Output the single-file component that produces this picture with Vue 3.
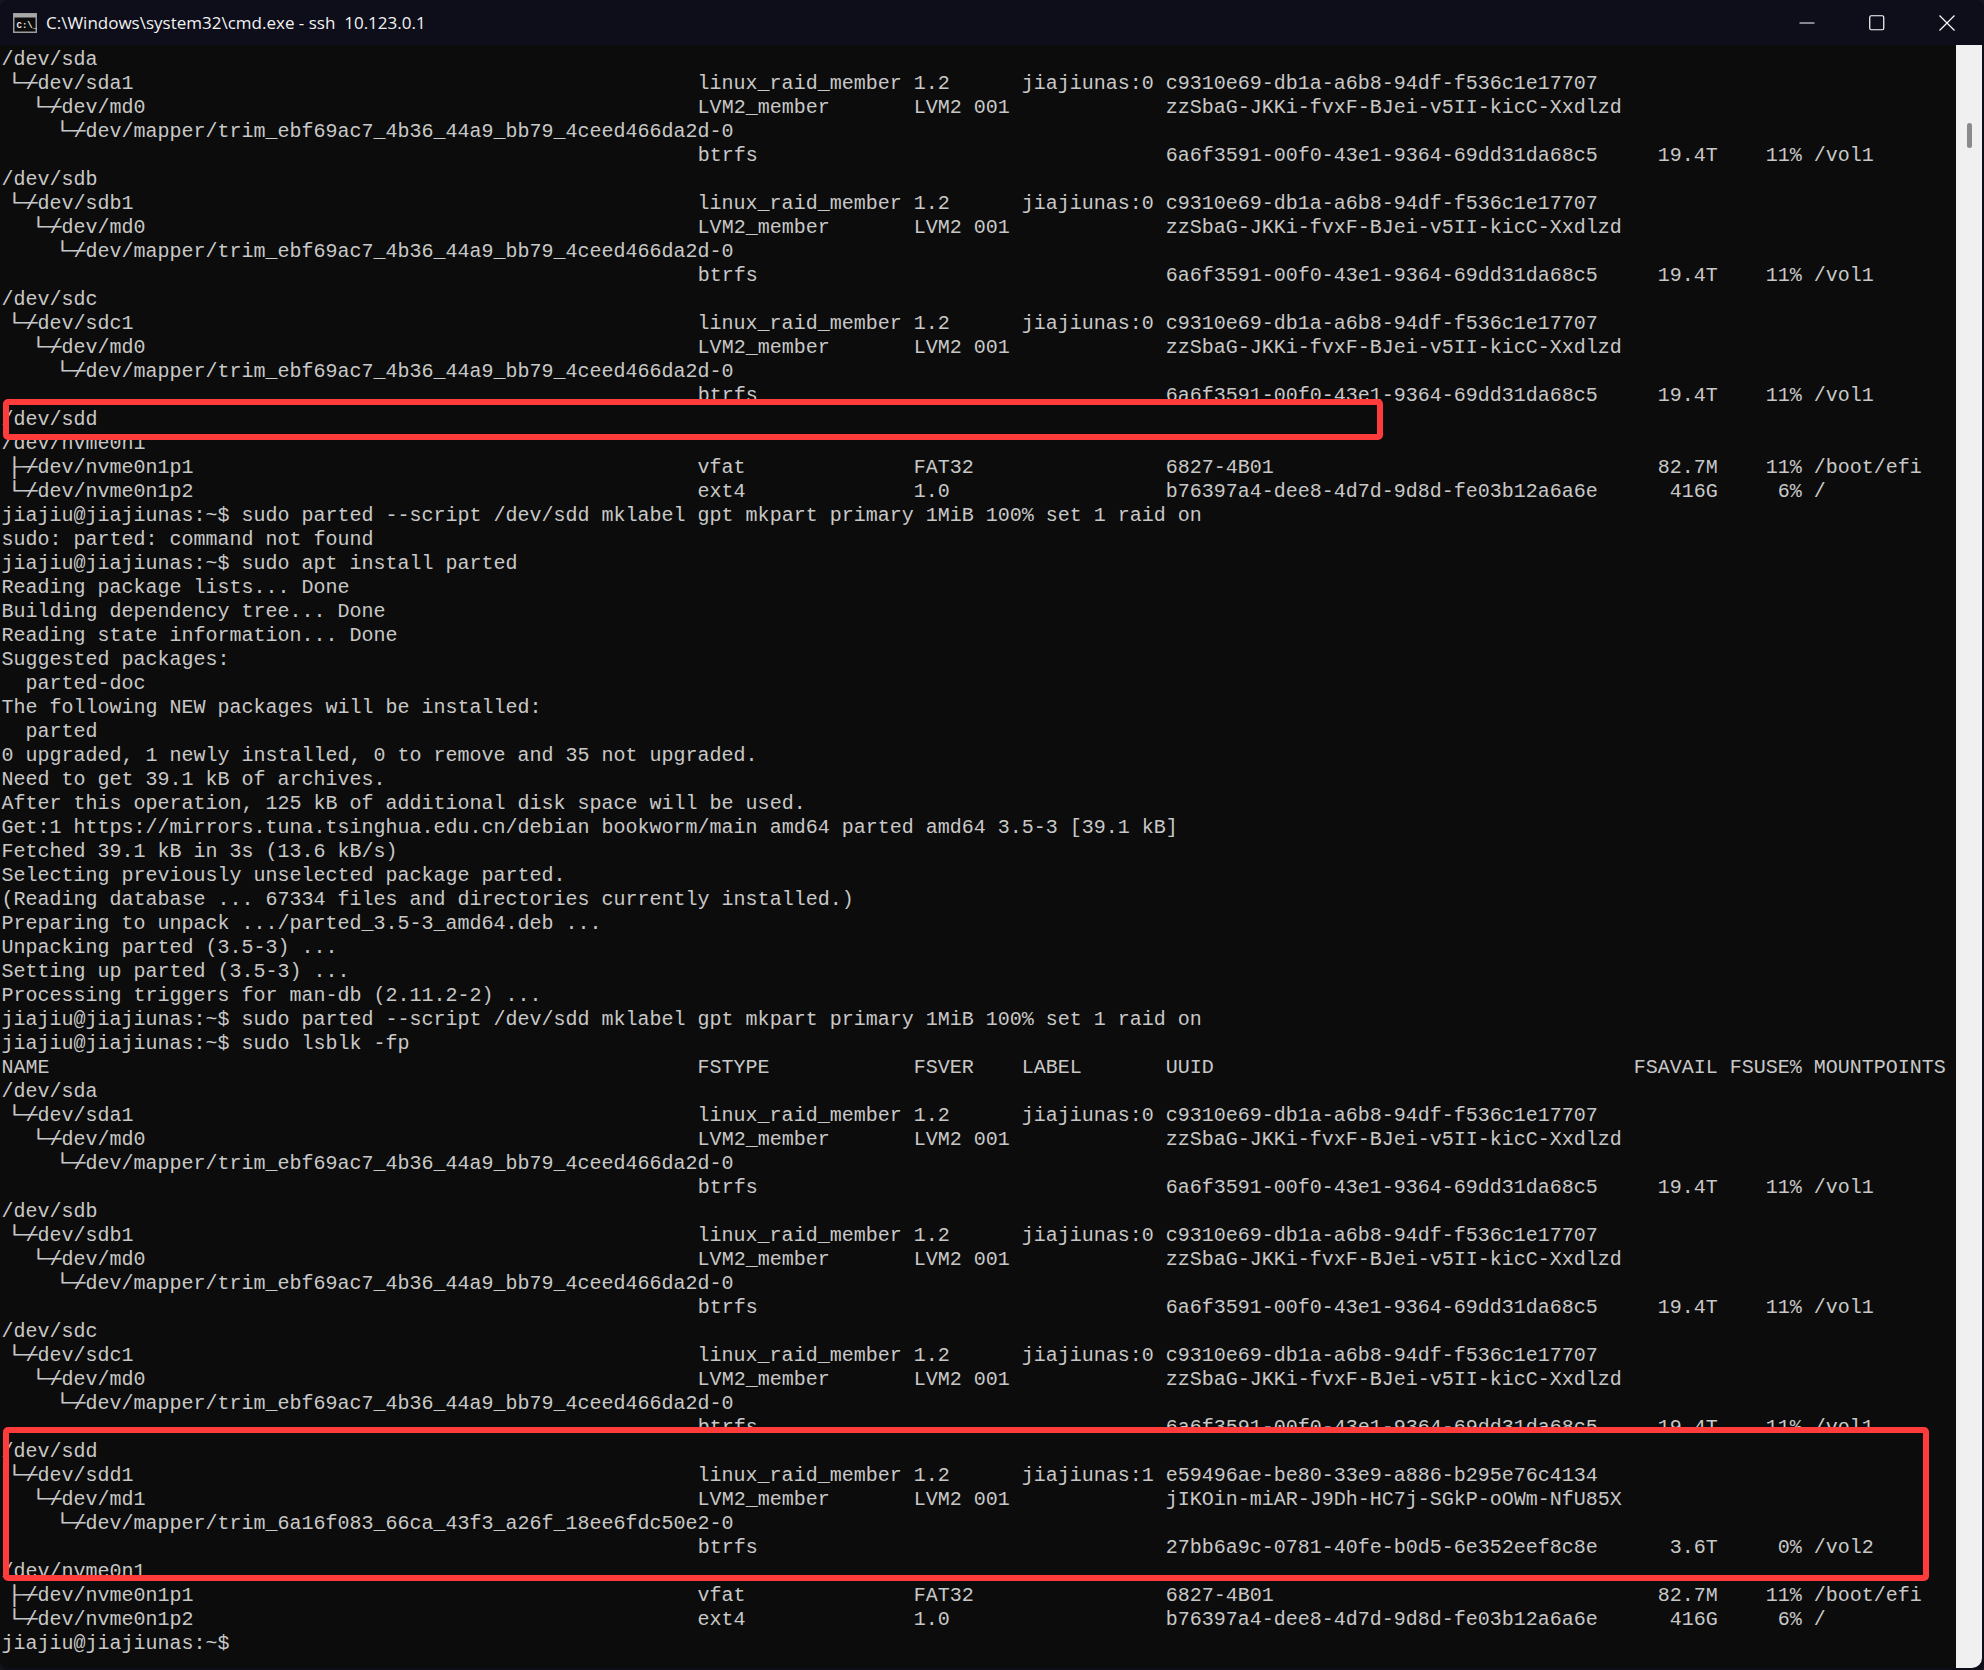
<script setup>
const COLS = [0, 58, 76, 85, 97, 136, 144, 151]

const row = (name, fstype = '', fsver = '', label = '', uuid = '', avail = '', use = '', mount = '') => {
  const pad = (text, col) => text.padEnd(col)
  let out = pad(name, COLS[1]) + pad(fstype, COLS[2] - COLS[1]) + pad(fsver, COLS[3] - COLS[2])
  out += pad(label, COLS[4] - COLS[3])
  out += uuid
  if (avail || use || mount) {
    out = out.padEnd(COLS[5]) + avail.padStart(COLS[6] - COLS[5] - 1) + ' ' + use.padStart(COLS[7] - COLS[6] - 1) + ' ' + mount
  }
  return out
}

const raidDisk = (letter) => [
  `/dev/sd${letter}`,
  row(`└─/dev/sd${letter}1`, 'linux_raid_member', '1.2', 'jiajiunas:0', 'c9310e69-db1a-a6b8-94df-f536c1e17707'),
  row('  └─/dev/md0', 'LVM2_member', 'LVM2 001', '', 'zzSbaG-JKKi-fvxF-BJei-v5II-kicC-Xxdlzd'),
  '    └─/dev/mapper/trim_ebf69ac7_4b36_44a9_bb79_4ceed466da2d-0',
  row('', 'btrfs', '', '', '6a6f3591-00f0-43e1-9364-69dd31da68c5', '19.4T', '11%', '/vol1'),
]

const nvme = [
  '/dev/nvme0n1',
  row('├─/dev/nvme0n1p1', 'vfat', 'FAT32', '', '6827-4B01', '82.7M', '11%', '/boot/efi'),
  row('└─/dev/nvme0n1p2', 'ext4', '1.0', '', 'b76397a4-dee8-4d7d-9d8d-fe03b12a6a6e', '416G', '6%', '/'),
]

const parted = 'sudo parted --script /dev/sdd mklabel gpt mkpart primary 1MiB 100% set 1 raid on'

const text = [
  ...raidDisk('a'),
  ...raidDisk('b'),
  ...raidDisk('c'),
  '/dev/sdd',
  ...nvme,
  `jiajiu@jiajiunas:~$ ${parted}`,
  'sudo: parted: command not found',
  'jiajiu@jiajiunas:~$ sudo apt install parted',
  'Reading package lists... Done',
  'Building dependency tree... Done',
  'Reading state information... Done',
  'Suggested packages:',
  '  parted-doc',
  'The following NEW packages will be installed:',
  '  parted',
  '0 upgraded, 1 newly installed, 0 to remove and 35 not upgraded.',
  'Need to get 39.1 kB of archives.',
  'After this operation, 125 kB of additional disk space will be used.',
  'Get:1 https://mirrors.tuna.tsinghua.edu.cn/debian bookworm/main amd64 parted amd64 3.5-3 [39.1 kB]',
  'Fetched 39.1 kB in 3s (13.6 kB/s)',
  'Selecting previously unselected package parted.',
  '(Reading database ... 67334 files and directories currently installed.)',
  'Preparing to unpack .../parted_3.5-3_amd64.deb ...',
  'Unpacking parted (3.5-3) ...',
  'Setting up parted (3.5-3) ...',
  'Processing triggers for man-db (2.11.2-2) ...',
  `jiajiu@jiajiunas:~$ ${parted}`,
  'jiajiu@jiajiunas:~$ sudo lsblk -fp',
  'NAME'.padEnd(58) + 'FSTYPE'.padEnd(18) + 'FSVER'.padEnd(9) + 'LABEL'.padEnd(12) + 'UUID'.padEnd(39) + 'FSAVAIL FSUSE% MOUNTPOINTS',
  ...raidDisk('a'),
  ...raidDisk('b'),
  ...raidDisk('c'),
  '/dev/sdd',
  row('└─/dev/sdd1', 'linux_raid_member', '1.2', 'jiajiunas:1', 'e59496ae-be80-33e9-a886-b295e76c4134'),
  row('  └─/dev/md1', 'LVM2_member', 'LVM2 001', '', 'jIKOin-miAR-J9Dh-HC7j-SGkP-oOWm-NfU85X'),
  '    └─/dev/mapper/trim_6a16f083_66ca_43f3_a26f_18ee6fdc50e2-0',
  row('', 'btrfs', '', '', '27bb6a9c-0781-40fe-b0d5-6e352eef8c8e', '3.6T', '0%', '/vol2'),
  ...nvme,
  'jiajiu@jiajiunas:~$',
]

const lines = text.map((line) => {
  const [, indent, branch = '', rest] = line.match(/^(\s*?)([└├]─)?(\S.*|\s*)$/)
  return { indent, branch, rest }
})
</script>

<template>
  <div class="window">
    <header class="titlebar">
      <svg class="app-icon" viewBox="0 0 24 20" width="24" height="20">
        <rect x="0.75" y="0.75" width="22.5" height="18.5" fill="#0c0c0c" stroke="#9c9c9c" stroke-width="1.5" />
        <rect x="1" y="1" width="22" height="3.5" fill="#a8a8a8" />
        <text x="3.5" y="15" class="app-icon-text">C:\_</text>
      </svg>
      <span class="title">C:\Windows\system32\cmd.exe - ssh&nbsp;&nbsp;10.123.0.1</span>
      <div class="controls">
        <button class="control" aria-label="Minimize">
          <svg viewBox="0 0 16 16" width="16" height="16"><path d="M0.5 8h15" stroke="#fff" fill="none" /></svg>
        </button>
        <button class="control" aria-label="Maximize">
          <svg viewBox="0 0 16 16" width="16" height="16"><rect x="0.75" y="0.75" width="14" height="14" rx="1.5" stroke="#fff" fill="none" stroke-width="1.2" /></svg>
        </button>
        <button class="control" aria-label="Close">
          <svg viewBox="0 0 16 16" width="16" height="16"><path d="M0.5 0.5l15 15M15.5 0.5l-15 15" stroke="#fff" fill="none" stroke-width="1.2" /></svg>
        </button>
      </div>
    </header>
    <div class="body">
      <main class="terminal">
        <div v-for="(line, i) in lines" :key="i" class="line">{{ line.indent }}<span v-if="line.branch" class="branch">{{ line.branch }}</span>{{ line.rest }}</div>
        <div class="highlight highlight-top"></div>
        <div class="highlight highlight-bottom"></div>
      </main>
      <aside class="scrollbar"><div class="thumb"></div></aside>
    </div>
  </div>
</template>

<style>
html, body { margin: 0; background: #15151c; }
</style>

<style scoped>
.window {
  width: 1984px;
  height: 1670px;
  box-sizing: border-box;
  display: flex;
  flex-direction: column;
  padding: 0 2px 2px 0;
  background: #0d0e1a;
  overflow: hidden;
  border-radius: 8px;
}
.titlebar {
  height: 45px;
  flex: none;
  display: flex;
  align-items: center;
  padding-left: 13px;
  color: #f2f2f2;
}
.app-icon { flex: none; margin-right: 9px; }
.app-icon-text { font: bold 9px "Liberation Mono", monospace; fill: #e6e6e6; }
.title { font: 17px "Open Sans", "Noto Sans", sans-serif; }
.controls { margin-left: auto; display: flex; }
.control {
  width: 70px;
  height: 45px;
  padding: 0;
  border: 0;
  background: none;
  display: flex;
  align-items: center;
  justify-content: center;
}
.body { flex: 1; display: flex; min-height: 0; }
.terminal {
  position: relative;
  flex: 1;
  padding: 3px 0 0 1.5px;
  background: #0c0c0c;
  border-bottom-left-radius: 10px;
  font: 20px/24px "Liberation Mono", monospace;
  color: #c8c8c8;
}
.line {
  height: 24px;
  white-space: pre;
}
.branch {
  display: inline-block;
  width: 24px;
  transform: translateX(5px) scaleX(1.28);
  transform-origin: left center;
}
.highlight {
  position: absolute;
  left: 3px;
  border: 6px solid #ff3b3b;
  border-radius: 5px;
  box-sizing: border-box;
}
.highlight-top { top: 354px; width: 1380px; height: 41px; }
.highlight-bottom { top: 1382px; width: 1926px; height: 154px; }
.scrollbar {
  flex: none;
  width: 26px;
  background: #f0f0f0;
  display: flex;
  justify-content: center;
  border-bottom-right-radius: 10px;
}
.thumb {
  width: 5px;
  height: 25px;
  margin-top: 78px;
  border-radius: 3px;
  background: #8a8a8a;
}
</style>
